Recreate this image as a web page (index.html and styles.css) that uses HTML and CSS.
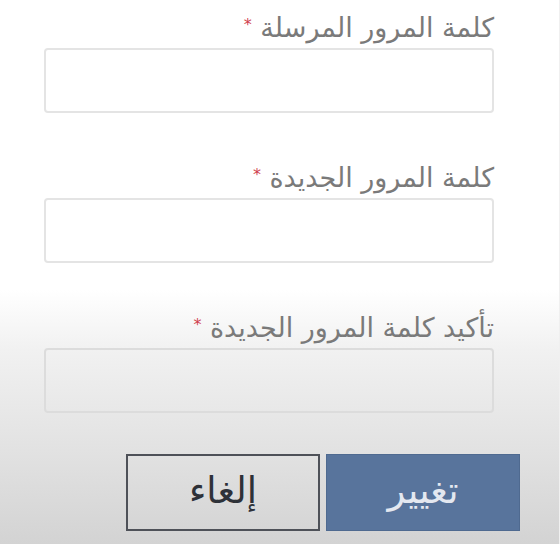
FILE: index.html
```html
<!DOCTYPE html>
<html lang="ar" dir="rtl">
<head>
    <meta charset="UTF-8">
    <meta name="viewport" content="width=device-width, initial-scale=1.0">
    <title>تغيير كلمة المرور</title>
    <link rel="stylesheet" href="styles.css">
</head>
<body>
    <form class="password-form">
        <div class="field">
            <label for="sent-password">كلمة المرور المرسلة <span class="req">*</span></label>
            <input type="password" id="sent-password">
        </div>
        <div class="field">
            <label for="new-password">كلمة المرور الجديدة <span class="req">*</span></label>
            <input type="password" id="new-password">
        </div>
        <div class="field">
            <label for="confirm-password">تأكيد كلمة المرور الجديدة <span class="req">*</span></label>
            <input type="password" id="confirm-password" class="dim">
        </div>
        <div class="actions">
            <button type="submit" class="btn btn-primary">تغيير</button>
            <button type="button" class="btn btn-cancel">إلغاء</button>
        </div>
    </form>
</body>
</html>
```

FILE: styles.css
```css
html, body {
    margin: 0;
    height: 100%;
}

body {
    font-family: "DejaVu Sans", sans-serif;
    background: linear-gradient(to bottom, #ffffff 0, #ffffff 290px, #f1f1f1 350px, #e2e2e2 450px, #d3d3d3 544px);
    border-right: 1px solid #f0f0f0;
    box-sizing: border-box;
}

.password-form {
    padding: 9px 65px 0 0;
}

.field {
    display: flex;
    flex-direction: column;
    align-items: flex-start;
    margin-bottom: 46px;
}

.field label {
    font-size: 27px;
    line-height: 32px;
    color: #7a7a7a;
    margin-bottom: 4px;
}

.req {
    color: #d0404e;
    font-size: 16px;
    vertical-align: 7px;
}

.field input {
    width: 450px;
    height: 65px;
    box-sizing: border-box;
    border: 2px solid #e4e4e4;
    border-radius: 4px;
    background: #fff;
}

.field input.dim {
    background: transparent;
    border-color: #dcdcdc;
}

.actions {
    display: flex;
    gap: 6px;
    margin: -5px -26px 0 0;
}

.btn {
    width: 194px;
    height: 77px;
    font-family: "DejaVu Sans", sans-serif;
    font-size: 37px;
    padding: 0 0 4px;
}

.btn-primary {
    background: #58749c;
    color: #e4e8f0;
    border: 1px solid #4f6a90;
}

.btn-cancel {
    background: transparent;
    color: #2e3138;
    border: 2px solid #4e5158;
}
```
